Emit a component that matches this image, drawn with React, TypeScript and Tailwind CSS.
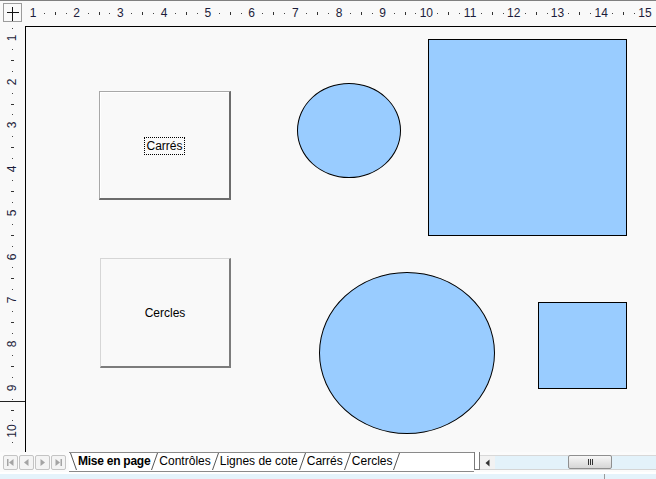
import React from "react";

const CM = 43.71;
const FONT = { fontFamily: '"Liberation Sans", Arial, sans-serif' };

function HRuler() {
  const marks: React.ReactNode[] = [];
  for (let n = 1; n <= 15; n++) {
    const x = 8 + (n - 1) * CM;
    marks.push(
      <span
        key={`n${n}`}
        className="absolute top-[5px] -translate-x-1/2 text-[12px] leading-[14px] text-[#1c1c3a]"
        style={{ left: x }}
      >
        {n}
      </span>
    );
    [1, 2, 3].forEach((q) => {
      const tx = Math.round(x + (q * CM) / 4);
      marks.push(
        q === 2 ? (
          <span key={`t${n}${q}`} className="absolute top-[11px] h-[3px] w-px bg-[#333]" style={{ left: tx }} />
        ) : (
          <span key={`t${n}${q}`} className="absolute top-[12px] h-px w-px bg-[#444]" style={{ left: tx }} />
        )
      );
    });
  }
  return <div className="relative flex-1 overflow-hidden">{marks}</div>;
}

function VRuler() {
  const marks: React.ReactNode[] = [];
  marks.push(<span key="d0" className="absolute left-[12px] top-[2px] h-px w-px bg-[#444]" />);
  for (let n = 1; n <= 10; n++) {
    const y = 12 + (n - 1) * CM;
    marks.push(
      <span
        key={`n${n}`}
        className="absolute left-[12px] -translate-x-1/2 -translate-y-1/2 -rotate-90 text-[12px] leading-[14px] text-[#1c1c3a]"
        style={{ top: y }}
      >
        {n}
      </span>
    );
    [1, 2, 3].forEach((q) => {
      const ty = Math.round(y + (q * CM) / 4);
      marks.push(
        q === 2 ? (
          <span key={`t${n}${q}`} className="absolute left-[11px] h-px w-[3px] bg-[#333]" style={{ top: ty }} />
        ) : (
          <span key={`t${n}${q}`} className="absolute left-[12px] h-px w-px bg-[#444]" style={{ top: ty }} />
        )
      );
    });
  }
  return (
    <div className="relative w-[25px] overflow-hidden">
      {marks}
      <span className="absolute left-0 top-[375px] h-px w-[25px] bg-[#222]" />
    </div>
  );
}

function NavButton({ kind }: { kind: "first" | "prev" | "next" | "last" }) {
  return (
    <div className="flex h-[15px] w-[15px] items-center justify-center rounded-[2px] border border-[#c4c4c4] bg-[#f4f4f4]">
      <svg width="9" height="9" viewBox="0 0 9 9" fill="#a4a4a4">
        {kind === "first" && (
          <>
            <rect x="1" y="1" width="1.5" height="7" />
            <path d="M7.5 1 L3 4.5 L7.5 8 Z" />
          </>
        )}
        {kind === "prev" && <path d="M6.5 1 L2 4.5 L6.5 8 Z" />}
        {kind === "next" && <path d="M2.5 1 L7 4.5 L2.5 8 Z" />}
        {kind === "last" && (
          <>
            <path d="M1.5 1 L6 4.5 L1.5 8 Z" />
            <rect x="6.5" y="1" width="1.5" height="7" />
          </>
        )}
      </svg>
    </div>
  );
}

function Slant({ back }: { back?: boolean }) {
  return (
    <svg width="7" height="17" viewBox="0 0 7 17" className="mx-px shrink-0">
      {back ? (
        <line x1="0.5" y1="0" x2="6.5" y2="17" stroke="#555" strokeWidth="1" />
      ) : (
        <line x1="0.5" y1="17" x2="6.5" y2="0" stroke="#555" strokeWidth="1" />
      )}
    </svg>
  );
}

const TABS = ["Contrôles", "Lignes de cote", "Carrés", "Cercles"];

export default function App() {
  return (
    <div className="flex h-[479px] w-[656px] flex-col overflow-hidden bg-[#f9f9f9] text-black" style={FONT}>
      <div className="h-px bg-[#808080]" />

      {/* règle horizontale */}
      <div className="flex h-[25px]">
        <div className="w-[25px] pl-[3px] pt-[2px]">
          <div className="relative h-[19px] w-[19px] border border-[#9c9c9c]">
            <svg width="17" height="17" viewBox="0 0 17 17" className="absolute left-0 top-0">
              <line x1="3" y1="8.5" x2="15" y2="8.5" stroke="#111" strokeWidth="1" />
              <line x1="8.5" y1="3" x2="8.5" y2="17" stroke="#111" strokeWidth="1" />
            </svg>
          </div>
        </div>
        <HRuler />
      </div>

      {/* zone de dessin */}
      <div className="flex h-[426px]">
        <VRuler />
        <div className="relative flex-1 overflow-hidden border-l border-t border-black bg-[#f9f9f9]">
          <button className="absolute left-[73px] top-[64px] flex h-[109px] w-[132px] items-center justify-center border-b-2 border-l border-r-2 border-t border-b-[#6c6c6c] border-l-[#a8a8a8] border-r-[#6c6c6c] border-t-[#a8a8a8] bg-[#f9f9f9] pt-[2px] text-[12px] shadow-[inset_1px_1px_0_#ffffff]">
            <span className="border border-dotted border-black px-px leading-[16px]">Carrés</span>
          </button>
          <button className="absolute left-[74px] top-[231px] flex h-[110px] w-[131px] items-center justify-center border-b-2 border-l border-r-2 border-t border-b-[#7c7c7c] border-l-[#d6d6d6] border-r-[#7c7c7c] border-t-[#d6d6d6] bg-[#f9f9f9] text-[12px]">
            Cercles
          </button>

          <div className="absolute left-[271px] top-[56px] h-[95px] w-[104px] rounded-[50%] border border-black bg-[#99ccff]" />
          <div className="absolute left-[402px] top-[12px] h-[197px] w-[199px] border border-black bg-[#99ccff]" />
          <div className="absolute left-[293px] top-[245px] h-[162px] w-[176px] rounded-[50%] border border-black bg-[#99ccff]" />
          <div className="absolute left-[512px] top-[275px] h-[87px] w-[89px] border border-black bg-[#99ccff]" />
        </div>
      </div>

      {/* barre d'onglets */}
      <div className="flex h-[20px] bg-[#fbfbfb]">
        <div className="flex w-[69px] items-center gap-px pl-[3px]">
          <NavButton kind="first" />
          <NavButton kind="prev" />
          <NavButton kind="next" />
          <NavButton kind="last" />
        </div>
        <div className="flex w-[405px] items-stretch border-b border-t border-[#8a8a8a] bg-white text-[12px] leading-[17px]">
          <Slant back />
          <span className="bg-white font-bold tracking-[-0.25px]">Mise en page</span>
          <Slant />
          {TABS.map((t) => (
            <React.Fragment key={t}>
              <span>{t}</span>
              <Slant />
            </React.Fragment>
          ))}
        </div>
        <div className="h-[18px] w-[6px] border-x border-b border-[#7a7a7a] bg-white" />
        <div className="flex flex-1 flex-col pt-[3px]">
          <div className="flex h-[14px] border-t border-[#d8d8d8]">
            <div className="flex w-[15px] items-center justify-center bg-[#f2f2f2]">
              <svg width="5" height="8" viewBox="0 0 5 8" fill="#333">
                <path d="M4.5 0.5 L0.5 4 L4.5 7.5 Z" />
              </svg>
            </div>
            <div className="relative flex-1 bg-[#e3f2fa]">
              <div className="absolute left-[73px] top-[-1px] flex h-[14px] w-[44px] items-center justify-center gap-px rounded-[2px] border border-[#8f8f8f] bg-gradient-to-b from-[#f7f7f7] to-[#d6d6d6]">
                <span className="h-[6px] w-px bg-[#333]" />
                <span className="h-[6px] w-px bg-[#333]" />
                <span className="h-[6px] w-px bg-[#333]" />
              </div>
            </div>
          </div>
          <div className="h-px bg-[#d4d4d4]" />
        </div>
      </div>

      {/* bande inférieure */}
      <div className="flex h-[7px] flex-col bg-white">
        <div className="h-[2px]" />
        <div className="flex flex-1 bg-[#e5f3fb]">
          <div className="w-[604px]" />
          <div className="w-px bg-[#9a9a9a]" />
        </div>
      </div>
    </div>
  );
}
